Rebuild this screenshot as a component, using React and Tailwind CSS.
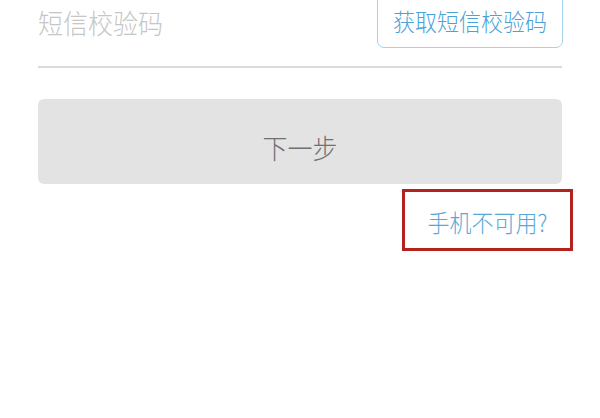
export default function App() {
  const font = { fontFamily: '"Noto Sans CJK SC", "Noto Sans", sans-serif' };
  return (
    <div className="w-[600px] h-[418px] bg-white overflow-hidden" style={font}>
      <div className="px-[38px]">
        <div className="flex justify-between items-start -mt-[8px] h-[74px]">
          <div className="pt-[18px] text-[25px] leading-[25px] font-light text-[#c6c6c6]">
            <span className="inline-block scale-y-[1.09]">短信校验码</span>
          </div>
          <div className="h-[56px] w-[186px] -mr-px flex items-center justify-center rounded-[7px] border-[1.5px] border-[#a6d3ec] text-[22px] leading-[22px] font-light text-[#4aa2d6]">
            <span className="inline-block scale-y-[1.09]">获取短信校验码</span>
          </div>
        </div>
        <div className="h-[2px] bg-[#dadada]" />
        <div className="mt-[31px] h-[85px] rounded-[6px] bg-[#e3e3e3] flex items-center justify-center pt-[11px] text-[25px] leading-[25px] font-light text-[#707070]">
          <span className="inline-block scale-y-[1.09]">下一步</span>
        </div>
        <div className="flex justify-end -mr-[11px] mt-[5px]">
          <div className="w-[171px] h-[62px] border-[3px] border-[#b3221d] flex items-center justify-center pt-[2px] text-[22px] leading-[22px] font-light text-[#55a8d8]">
            <span className="inline-block scale-y-[1.09]">手机不可用?</span>
          </div>
        </div>
      </div>
    </div>
  );
}
